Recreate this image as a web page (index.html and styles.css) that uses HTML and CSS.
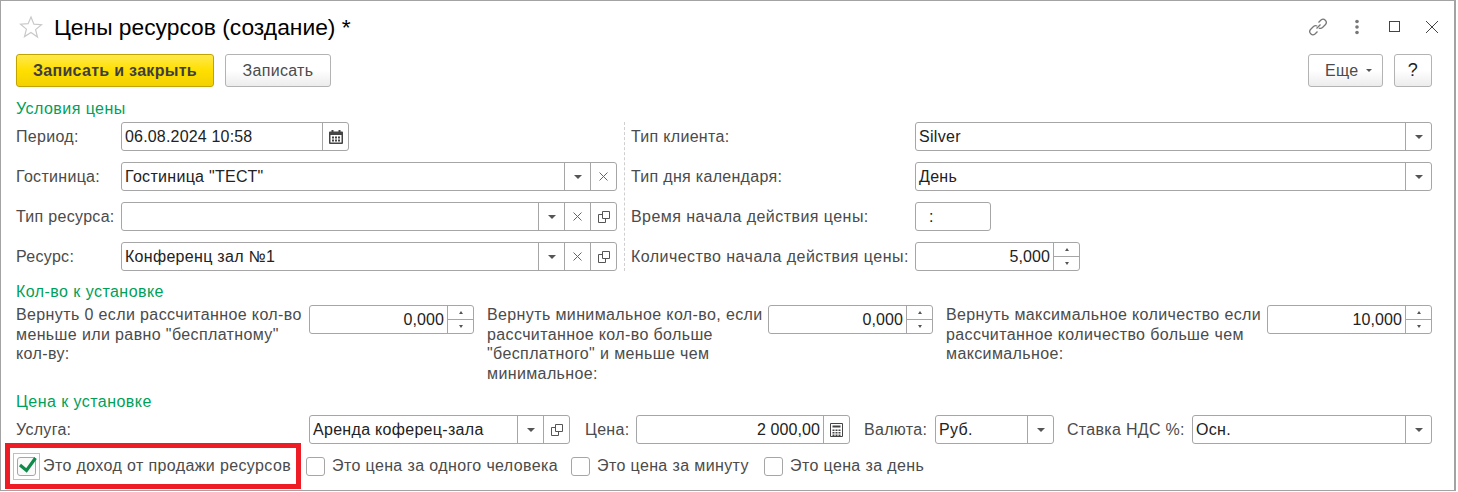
FILE: index.html
```html
<!DOCTYPE html>
<html lang="ru">
<head>
<meta charset="utf-8">
<title>Цены ресурсов</title>
<link rel="stylesheet" href="styles.css">
</head>
<body>
<svg class="defs" width="0" height="0">
  <symbol id="x" viewBox="0 0 9 9"><path d="M.5.5l8 8M8.500.5l-8 8" fill="none" stroke="#666" stroke-width="1"/></symbol>
  <symbol id="open" viewBox="0 0 12 12"><path d="M4.500 7.500V.5h7v7zM4.500 3.500H.5v8h7V7.500" fill="none" stroke="#555" stroke-width="1"/></symbol>
</svg>
<main class="window">
  <header class="titlebar">
    <svg class="star" width="24" height="24" viewBox="0 0 24 24"><path d="M12 2l2.900 7.200 7.600.5-5.900 4.900 1.900 7.500L12 17.500l-6.500 4.100 1.900-7.500-5.900-4.900 7.600-.5z" fill="#fff" stroke="#c9c9c9" stroke-width="1.200"/></svg>
    <h1 class="title">Цены ресурсов (создание) *</h1>
    <div class="winicons">
      <svg width="20" height="20" viewBox="0 0 20 20"><g fill="none" stroke="#777" stroke-width="1.300"><path d="M8.500 11.500l4-4"/><path d="M10.500 5.500l2.500-2.500a3.200 3.200 0 0 1 4.500 4.500l-3 3a3.200 3.200 0 0 1-3.700.5"/><path d="M9.500 14.500L7 17a3.200 3.200 0 0 1-4.500-4.500l3-3a3.200 3.200 0 0 1 3.700-.5"/></g></svg>
      <svg width="6" height="16" viewBox="0 0 6 16"><g fill="#777"><circle cx="3" cy="2.500" r="1.800"/><circle cx="3" cy="8" r="1.800"/><circle cx="3" cy="13.500" r="1.800"/></g></svg>
      <svg width="12" height="12" viewBox="0 0 12 12"><rect x=".5" y=".5" width="10" height="10" fill="none" stroke="#444"/></svg>
      <svg width="14" height="14" viewBox="0 0 14 14"><path d="M1 1l12 12M13 1L1 13" fill="none" stroke="#444" stroke-width="1"/></svg>
    </div>
  </header>

  <div class="toolbar">
    <button class="btn btn-primary">Записать и закрыть</button>
    <button class="btn btn-plain">Записать</button>
    <span class="spacer"></span>
    <button class="btn btn-more">Еще<i class="caret small"></i></button>
    <button class="btn btn-help">?</button>
  </div>

  <h2 class="section first">Условия цены</h2>
  <div class="conditions">
    <div class="col col-left">
      <div class="row"><label class="lbl">Период:</label>
        <div class="field w-date"><span class="val digits">06.08.2024 10:58</span>
          <span class="cell"><svg width="14" height="15" viewBox="0 0 14 15"><path d="M0 3.500a1 1 0 0 1 1-1h1.500V1h2v1.500h5V1h2v1.500H13a1 1 0 0 1 1 1V14a1 1 0 0 1-1 1H1a1 1 0 0 1-1-1z" fill="#444"/><path d="M1.500 6h11v7.500h-11z" fill="#fff"/><path d="M3 7.500h2v2H3zM6 7.500h2v2H6zM9 7.500h2v2H9zM3 10.500h2v2H3zM6 10.500h2v2H6zM9 10.500h2v2H9z" fill="#444"/></svg></span>
        </div>
      </div>
      <div class="row"><label class="lbl">Гостиница:</label>
        <div class="field grow"><span class="val">Гостиница "ТЕСТ"</span>
          <span class="cell"><i class="caret"></i></span>
          <span class="cell"><svg width="9" height="9"><use href="#x"/></svg></span>
        </div>
      </div>
      <div class="row"><label class="lbl">Тип ресурса:</label>
        <div class="field grow"><span class="val"></span>
          <span class="cell"><i class="caret"></i></span>
          <span class="cell"><svg width="9" height="9"><use href="#x"/></svg></span>
          <span class="cell"><svg width="12" height="12"><use href="#open"/></svg></span>
        </div>
      </div>
      <div class="row"><label class="lbl">Ресурс:</label>
        <div class="field grow"><span class="val">Конференц зал №1</span>
          <span class="cell"><i class="caret"></i></span>
          <span class="cell"><svg width="9" height="9"><use href="#x"/></svg></span>
          <span class="cell"><svg width="12" height="12"><use href="#open"/></svg></span>
        </div>
      </div>
    </div>
    <div class="col col-right">
      <div class="row"><label class="lbl lbl-right">Тип клиента:</label>
        <div class="field grow"><span class="val">Silver</span><span class="cell"><i class="caret"></i></span></div>
      </div>
      <div class="row"><label class="lbl lbl-right">Тип дня календаря:</label>
        <div class="field grow"><span class="val">День</span><span class="cell"><i class="caret"></i></span></div>
      </div>
      <div class="row"><label class="lbl lbl-right lbl-wide">Время начала действия цены:</label>
        <div class="field w-time"><span class="val time">:</span></div>
      </div>
      <div class="row"><label class="lbl lbl-right lbl-wide">Количество начала действия цены:</label>
        <div class="field w-qty"><span class="val num">5,000</span>
          <span class="spin"><span class="up"><i class="tri-up"></i></span><span class="down"><i class="tri-down"></i></span></span>
        </div>
      </div>
    </div>
  </div>

  <h2 class="section s2">Кол-во к установке</h2>
  <div class="install">
    <div class="inst inst-a">
      <p class="lbl-multi">Вернуть 0 если рассчитанное кол-во меньше или равно "бесплатному" кол-ву:</p>
      <div class="field w-spin"><span class="val num">0,000</span><span class="spin"><span class="up"><i class="tri-up"></i></span><span class="down"><i class="tri-down"></i></span></span></div>
    </div>
    <div class="inst inst-b">
      <p class="lbl-multi">Вернуть минимальное кол-во, если рассчитанное кол-во больше "бесплатного" и меньше чем минимальное:</p>
      <div class="field w-spin"><span class="val num">0,000</span><span class="spin"><span class="up"><i class="tri-up"></i></span><span class="down"><i class="tri-down"></i></span></span></div>
    </div>
    <div class="inst inst-c">
      <p class="lbl-multi">Вернуть максимальное количество если рассчитанное количество больше чем максимальное:</p>
      <div class="field w-spin"><span class="val num">10,000</span><span class="spin"><span class="up"><i class="tri-up"></i></span><span class="down"><i class="tri-down"></i></span></span></div>
    </div>
  </div>

  <h2 class="section s3">Цена к установке</h2>
  <div class="price">
    <label class="lbl lbl-service">Услуга:</label>
    <div class="field w-service"><span class="val">Аренда коферец-зала</span>
      <span class="cell"><i class="caret"></i></span>
      <span class="cell"><svg width="12" height="12"><use href="#open"/></svg></span>
    </div>
    <label class="lbl-inline l-price">Цена:</label>
    <div class="field w-price"><span class="val num">2 000,00</span>
      <span class="cell"><svg width="13" height="14" viewBox="0 0 13 14"><path d="M.5.500h12v13H.5z" fill="#fff" stroke="#444"/><path d="M2.500 2.500h8v2h-8zM2.500 6.500h2v1.500h-2zM5.500 6.500h2v1.500h-2zM8.500 6.500h2v1.500h-2zM2.500 9h2v1.500h-2zM5.500 9h2v1.500h-2zM8.500 9h2v1.500h-2zM2.500 11.500h2V13h-2zM5.500 11.500h2V13h-2zM8.500 11.500h2V13h-2z" fill="#444"/></svg></span>
    </div>
    <label class="lbl-inline l-cur">Валюта:</label>
    <div class="field w-cur"><span class="val">Руб.</span><span class="cell"><i class="caret"></i></span></div>
    <label class="lbl-inline l-vat">Ставка НДС %:</label>
    <div class="field grow"><span class="val">Осн.</span><span class="cell"><i class="caret"></i></span></div>
  </div>

  <div class="checks">
    <div class="check check-first">
      <span class="focus"><span class="box box-on"><svg class="tick" width="19" height="19" viewBox="0 0 19 19"><path d="M3 8l6.500 5.500L18.500 1" fill="none" stroke="#0f8a4a" stroke-width="3.200"/></svg></span></span>
      <span>Это доход от продажи ресурсов</span>
    </div>
    <div class="check c2"><span class="box"></span><span>Это цена за одного человека</span></div>
    <div class="check c3"><span class="box"></span><span>Это цена за минуту</span></div>
    <div class="check c4"><span class="box"></span><span>Это цена за день</span></div>
    <div class="redmark"></div>
  </div>
</main>
</body>
</html>
```

FILE: styles.css
```css
* { box-sizing: border-box; }
html, body { margin: 0; padding: 0; background: #fff; }
body { width: 1458px; height: 492px; overflow: hidden; font-family: "Liberation Sans", Arial, sans-serif; font-size: 16px; letter-spacing: .3px; color: #4b4b4b; }
.defs { display: block; position: absolute; }
.window { position: relative; width: 1456px; height: 491px; border: 1px solid #a3a3a3; border-right-width: 2px; padding: 0 22px 0 15px; }
.titlebar { display: flex; align-items: center; height: 53px; padding-bottom: 2px; }
.star { margin-left: 3px; margin-right: 11px; flex: none; }
.title { margin: 0; font-size: 22.8px; font-weight: 400; letter-spacing: 0; color: #000; line-height: 26px; }
.winicons { margin-left: auto; margin-right: -7px; display: flex; align-items: center; }
.winicons svg:nth-child(1) { margin-right: 26px; }
.winicons svg:nth-child(2) { margin-right: 29px; }
.winicons svg:nth-child(3) { margin-right: 24px; }

.toolbar { display: flex; height: 33px; gap: 11px; }
.spacer { flex: 1; }
.btn { font: inherit; letter-spacing: .3px; height: 33px; border-radius: 3px; padding: 0; color: #4b4b4b; border: 1px solid #b3b3b3; background: linear-gradient(#fff, #fff 50%, #ececec); }
.btn-primary { width: 198px; font-weight: 700; color: #3e3e3e; border-color: #c2a400; background: linear-gradient(#ffe94d, #ffdf00 50%, #f2d100); }
.btn-plain { width: 106px; }
.btn-more { width: 75px; display: flex; align-items: center; padding-left: 16px; gap: 8px; }
.btn-help { width: 38px; font-size: 18px; color: #222; }

.section { margin: 0; font-weight: 400; font-size: 16px; letter-spacing: .45px; line-height: 17px; color: #00a05a; }
.section.first { margin-top: 13px; }
.s2 { margin-top: 12px; }
.s3 { margin-top: 13px; }

.conditions { display: flex; margin-top: 5px; }
.col { display: flex; flex-direction: column; gap: 11px; }
.col-left { width: 609px; padding-right: 7px; border-right: 1px dashed #cfcfcf; }
.col-right { flex: 1; padding-left: 6px; }
.row { display: flex; align-items: center; height: 29px; }
.lbl { flex: none; width: 105px; white-space: nowrap; }
.lbl-right { width: 284px; }
.lbl-wide { letter-spacing: .45px; }

.field { display: flex; height: 29px; border: 1px solid #a6a6a6; border-radius: 3px; background: #fff; color: #222; letter-spacing: .3px; }
.grow { flex: 1; min-width: 0; }
.val { flex: 1; min-width: 0; padding-left: 3px; line-height: 27px; white-space: nowrap; }
.digits { letter-spacing: .18px; }
.num { text-align: right; padding-right: 3px; padding-left: 0; letter-spacing: .1px; }
.time { padding-left: 13px; }
.cell { flex: none; width: 26px; display: flex; align-items: center; justify-content: center; border-left: 1px solid #a6a6a6; }
.w-date { width: 228px; }
.w-time { width: 76px; }
.w-qty { width: 165px; }
.w-spin { flex: none; width: 165px; }
.caret { display: block; width: 0; height: 0; border-left: 4px solid transparent; border-right: 4px solid transparent; border-top: 4px solid #555; }
.caret.small { border-left-width: 3px; border-right-width: 3px; border-top-width: 3px; }
.spin { flex: none; width: 26px; display: flex; flex-direction: column; border-left: 1px solid #a6a6a6; }
.spin span { flex: 1; display: flex; align-items: center; justify-content: center; }
.spin .down { border-top: 1px solid #a6a6a6; }
.tri-up, .tri-down { display: block; width: 0; height: 0; border-left: 2.500px solid transparent; border-right: 2.500px solid transparent; }
.tri-up { border-bottom: 3px solid #555; }
.tri-down { border-top: 3px solid #555; }

.install { display: flex; margin-top: 5px; height: 75px; }
.inst { display: flex; align-items: flex-start; }
.lbl-multi { margin: 0; line-height: 19.500px; flex: none; letter-spacing: .38px; }
.inst-a { width: 471px; }
.inst-a .lbl-multi { width: 293px; }
.inst-b { width: 459px; }
.inst-b .lbl-multi { width: 281px; }
.inst-c { flex: 1; }
.inst-c .lbl-multi { width: 321px; }

.price { display: flex; align-items: center; margin-top: 5px; height: 29px; }
.lbl-service { width: 293px; }
.w-service { width: 261px; flex: none; }
.lbl-inline { flex: none; white-space: nowrap; }
.l-price { width: 66px; padding-left: 15px; }
.w-price { width: 214px; flex: none; }
.l-cur { width: 85px; padding-left: 14px; }
.w-cur { width: 119px; flex: none; }
.l-vat { width: 138px; padding-left: 13px; }

.checks { position: relative; display: flex; align-items: center; height: 20px; margin-top: 12px; }
.check { display: flex; align-items: center; flex: none; white-space: nowrap; letter-spacing: .38px; }
.box { display: flex; align-items: center; justify-content: center; width: 19px; height: 19px; border: 1px solid #a6a6a6; border-radius: 3px; background: #fff; flex: none; margin-right: 7px; }
.box-on { background: #fafafa; }
.tick { flex: none; overflow: visible; }
.focus { display: flex; align-items: center; justify-content: center; width: 27px; height: 27px; border: 1px solid #f5c518; flex: none; margin: 0 3px 0 -3px; }
.focus .box { margin: 0; }
.check-first { width: 290px; }
.c2 { width: 265px; }
.c3 { width: 193px; }
.redmark { position: absolute; left: -11px; top: -13px; width: 296px; height: 46px; border: 5px solid #ee1c25; pointer-events: none; }
```
